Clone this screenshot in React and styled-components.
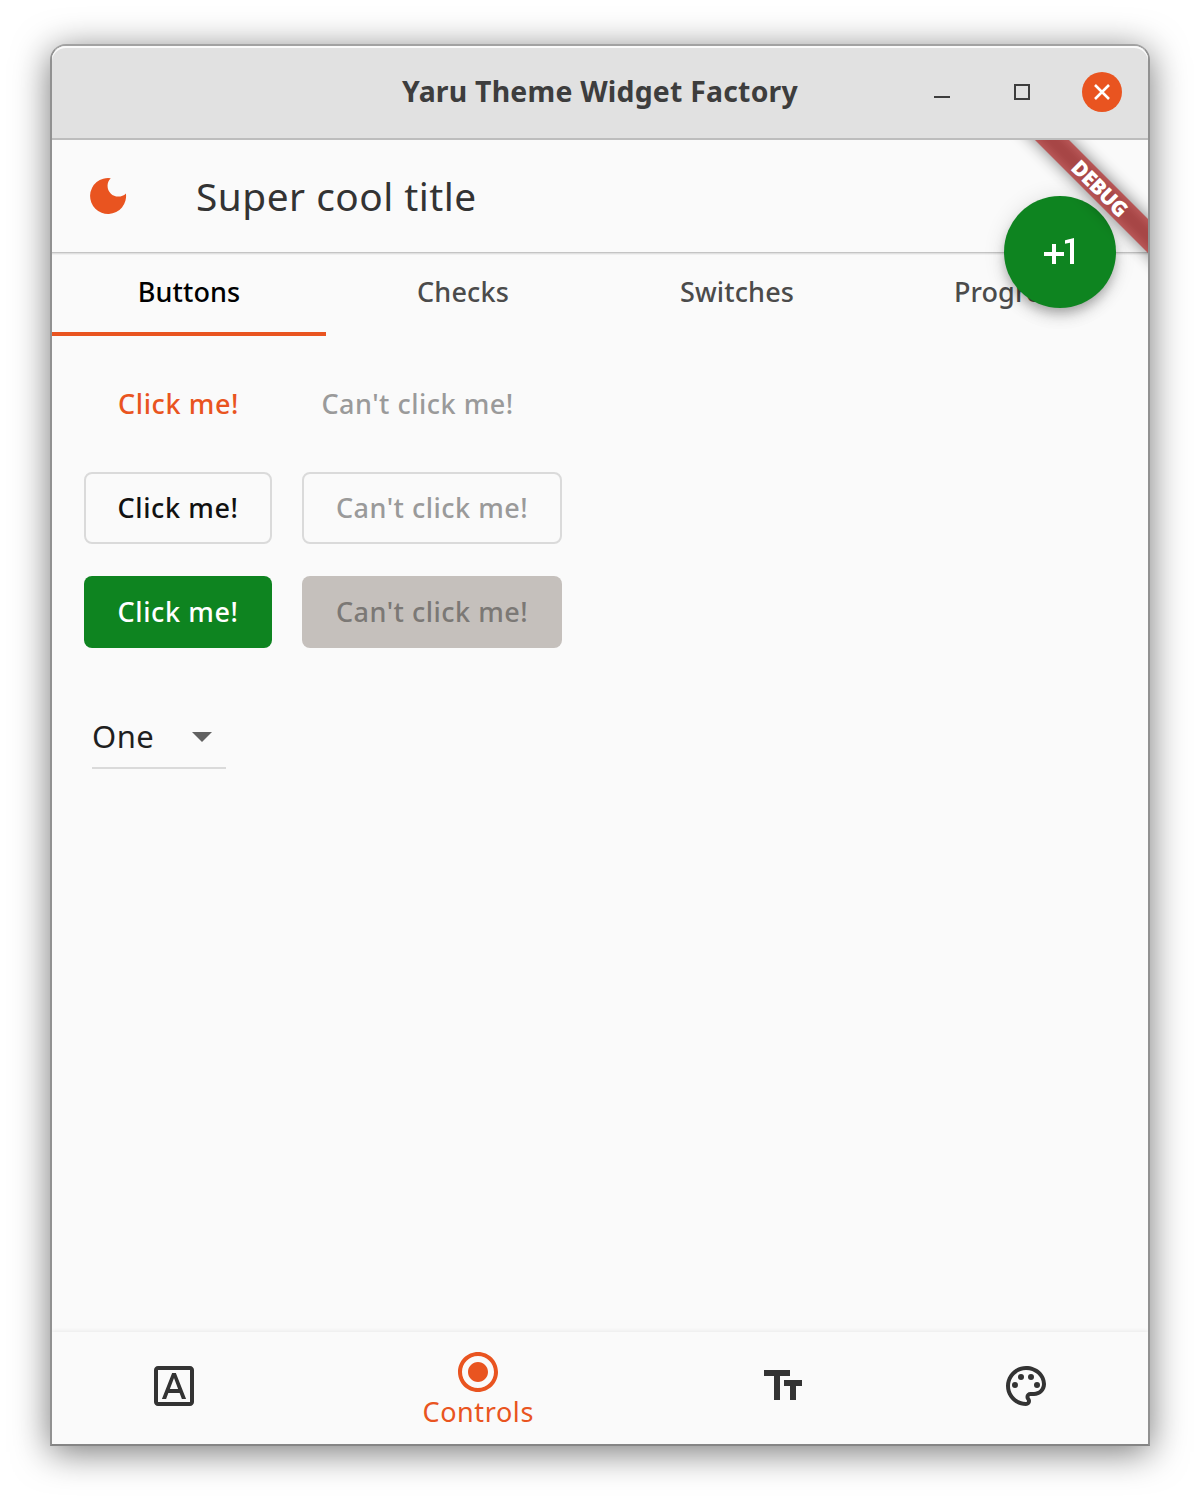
import React, { useState } from "react";
import styled, { createGlobalStyle, css } from "styled-components";
import {
  MdOutlineFontDownload,
  MdRadioButtonChecked,
  MdTextFields,
  MdOutlinePalette,
  MdPlusOne,
} from "react-icons/md";

const color = {
  orange: "#e95420",
  green: "#0e8420",
  surface: "#fafafa",
  ink: "#333333",
  outline: "#dadada",
};

const GlobalStyle = createGlobalStyle`
  * { box-sizing: border-box; }
  body {
    margin: 0;
    background: #fff;
    font-family: "Noto Sans", "Open Sans", sans-serif;
  }
  button { font-family: inherit; }
`;

const Desktop = styled.div`
  height: 1502px;
  padding: 44px 50px 56px;
`;

const Window = styled.div`
  height: 1402px;
  display: flex;
  flex-direction: column;
  border: 2px solid #919191;
  border-top-color: #a2a2a2;
  border-bottom-color: #858585;
  border-radius: 16px 16px 0 0;
  background: ${color.surface};
  box-shadow: 0 6px 36px rgba(0, 0, 0, 0.54);
`;

const TitleBar = styled.header`
  flex: none;
  height: 94px;
  display: grid;
  grid-template-columns: 1fr auto 1fr;
  align-items: center;
  padding: 0 26px 0 26px;
  background: #e1e1e1;
  border-bottom: 2px solid #bdbdbd;
  border-radius: 14px 14px 0 0;
  box-shadow: inset 0 2px 0 #fafafa;
`;

const WindowTitle = styled.h1`
  grid-column: 2;
  margin: 0;
  padding-bottom: 2px;
  font-size: 28.4px;
  font-weight: 700;
  line-height: 40px;
  letter-spacing: 0.22px;
  color: #3d3d3d;
`;

const WindowControls = styled.div`
  display: flex;
  justify-content: flex-end;
  gap: 40px;
`;

const ControlButton = styled.button`
  width: 40px;
  height: 40px;
  padding: 0;
  border: 0;
  border-radius: 50%;
  display: grid;
  place-items: center;
  color: ${(p) => (p.$accent ? "#fff" : "#3d3d3d")};
  background: ${(p) => (p.$accent ? color.orange : "transparent")};
`;

const Body = styled.main`
  position: relative;
  flex: 1;
  min-height: 0;
  display: flex;
  flex-direction: column;
  overflow: hidden;
`;

const AppBar = styled.div`
  flex: none;
  height: 112px;
  display: flex;
  align-items: center;
  padding: 0 36px;
  gap: 68px;
  background: ${color.surface};
  box-shadow: 0 1px 0 #c4c4c4, 0 2px 0 #e0e0e0, 0 3px 0 #f0f0f0;
`;

const AppTitle = styled.h2`
  margin: 0;
  font-size: 38.8px;
  font-weight: 400;
  line-height: 56px;
  letter-spacing: 0.5px;
  color: ${color.ink};
`;

const Tabs = styled.nav`
  flex: none;
  height: 84px;
  display: grid;
  grid-template-columns: repeat(4, 1fr);
`;

const Tab = styled.button`
  padding: 0;
  border: 0;
  border-bottom: 4px solid ${(p) => (p.$active ? color.orange : "transparent")};
  background: none;
  font-size: 27px;
  font-weight: 540;
  line-height: 38px;
  letter-spacing: 0.12px;
  color: ${(p) => (p.$active ? "#000" : "#4b4b4b")};
`;

const Content = styled.section`
  flex: 1;
  display: flex;
  flex-direction: column;
  align-items: flex-start;
  gap: 32px;
  padding: 32px;
`;

const ButtonRow = styled.div`
  display: flex;
  gap: 30px;
`;

const variants = {
  text: css`
    padding: 0;
    width: ${(p) => (p.disabled ? 229 : 189)}px;
    color: ${(p) => (p.disabled ? "#9a9a9a" : color.orange)};
  `,
  outlined: css`
    border: 2px solid ${color.outline};
    color: ${(p) => (p.disabled ? "#9a9a9a" : "#111")};
  `,
  filled: css`
    background: ${(p) => (p.disabled ? "#c5c0bc" : color.green)};
    color: ${(p) => (p.disabled ? "#7b7875" : "#fff")};
  `,
};

const Button = styled.button`
  width: ${(p) => (p.disabled ? 260 : 188)}px;
  height: 72px;
  padding: 0;
  border: 0;
  border-radius: 8px;
  background: none;
  font-size: 27px;
  font-weight: 550;
  line-height: 38px;
  letter-spacing: ${(p) => (p.disabled ? 0.5 : 0.6)}px;
  white-space: nowrap;
  ${(p) => variants[p.$variant]}
`;

const Dropdown = styled.button`
  width: 134px;
  height: 65px;
  margin: 24px 0 0 8px;
  padding: 0 14px 0 0;
  display: flex;
  align-items: center;
  justify-content: space-between;
  border: 0;
  border-bottom: 2px solid ${color.outline};
  background: none;
  font-size: 31px;
  line-height: 44px;
  letter-spacing: 0.5px;
  color: #1f1f1f;

  svg { margin-top: 2px; }
`;

const BottomNav = styled.nav`
  flex: none;
  height: 112px;
  display: flex;
  background: ${color.surface};
  box-shadow: 0 -1px 4px rgba(0, 0, 0, 0.07);
`;

const NavItem = styled.button`
  flex: ${(p) => (p.$active ? 1.5 : 1)} 1 0;
  padding: ${(p) => (p.$active ? "1px 0 0" : "0 0 4px")};
  border: 0;
  background: none;
  display: flex;
  flex-direction: column;
  align-items: center;
  justify-content: center;
  color: ${(p) => (p.$active ? color.orange : color.ink)};
`;

const NavLabel = styled.span`
  margin-top: -1px;
  font-size: 27px;
  line-height: 34px;
  letter-spacing: 0.6px;
`;

const Fab = styled.button`
  position: absolute;
  top: 56px;
  right: 32px;
  width: 112px;
  height: 112px;
  padding: 0;
  border: 0;
  border-radius: 50%;
  display: grid;
  place-items: center;
  color: #fff;
  background: ${color.green};
  box-shadow: 0 6px 10px -2px rgba(0, 0, 0, 0.2), 0 10px 14px rgba(0, 0, 0, 0.1),
    0 2px 22px rgba(0, 0, 0, 0.12);
`;

const DebugBanner = styled.div`
  position: absolute;
  top: 36px;
  right: -112px;
  width: 320px;
  height: 24px;
  transform: rotate(45deg);
  display: grid;
  place-items: center;
  font-size: 21px;
  font-weight: 900;
  line-height: 24px;
  letter-spacing: -0.6px;
  color: #fff;
  pointer-events: none;

  &::before,
  &::after {
    content: "";
    position: absolute;
    inset: 0;
    z-index: -1;
  }
  &::before {
    background: rgba(0, 0, 0, 0.5);
    filter: blur(8px);
  }
  &::after {
    background: rgba(183, 28, 28, 0.627);
  }
`;

const MinimizeIcon = () => (
  <svg width="16" height="16" viewBox="0 0 16 16">
    <path d="M0 13h16" stroke="currentColor" strokeWidth="2" />
  </svg>
);

const MaximizeIcon = () => (
  <svg width="16" height="16" viewBox="0 0 16 16">
    <rect x="1" y="1" width="14" height="14" fill="none" stroke="currentColor" strokeWidth="2" />
  </svg>
);

const CloseIcon = () => (
  <svg width="16" height="16" viewBox="0 0 16 16">
    <path d="M1 1l14 14M15 1L1 15" stroke="currentColor" strokeWidth="2.6" />
  </svg>
);

const MoonIcon = () => (
  <svg width="40" height="40" viewBox="0 0 40 40">
    <path fill={color.orange} d="M22.7 2.2A18 18 0 1 0 37.9 17.4A10.7 10.7 0 1 1 22.7 2.2Z" />
  </svg>
);

const ArrowIcon = () => (
  <svg width="20" height="10" viewBox="0 0 20 10">
    <path fill="#616161" d="M0 0h20L10 10z" />
  </svg>
);

const TAB_NAMES = ["Buttons", "Checks", "Switches", "Progress"];

const NAV = [
  { label: "Fonts", Icon: MdOutlineFontDownload },
  { label: "Controls", Icon: MdRadioButtonChecked },
  { label: "Text", Icon: MdTextFields },
  { label: "Colors", Icon: MdOutlinePalette },
];

export default function App() {
  const [tab, setTab] = useState(0);
  const [page, setPage] = useState(1);

  return (
    <Desktop>
      <GlobalStyle />
      <Window>
        <TitleBar>
          <WindowTitle>Yaru Theme Widget Factory</WindowTitle>
          <WindowControls>
            <ControlButton><MinimizeIcon /></ControlButton>
            <ControlButton><MaximizeIcon /></ControlButton>
            <ControlButton $accent><CloseIcon /></ControlButton>
          </WindowControls>
        </TitleBar>
        <Body>
          <AppBar>
            <MoonIcon />
            <AppTitle>Super cool title</AppTitle>
          </AppBar>
          <Tabs>
            {TAB_NAMES.map((name, i) => (
              <Tab key={name} $active={i === tab} onClick={() => setTab(i)}>{name}</Tab>
            ))}
          </Tabs>
          <Content>
            {["text", "outlined", "filled"].map((variant) => (
              <ButtonRow key={variant}>
                <Button $variant={variant}>Click me!</Button>
                <Button $variant={variant} disabled>Can't click me!</Button>
              </ButtonRow>
            ))}
            <Dropdown>
              One
              <ArrowIcon />
            </Dropdown>
          </Content>
          <BottomNav>
            {NAV.map(({ label, Icon }, i) => (
              <NavItem key={label} $active={i === page} onClick={() => setPage(i)}>
                <Icon size={48} />
                {i === page && <NavLabel>{label}</NavLabel>}
              </NavItem>
            ))}
          </BottomNav>
          <Fab><MdPlusOne size={48} /></Fab>
          <DebugBanner>DEBUG</DebugBanner>
        </Body>
      </Window>
    </Desktop>
  );
}
